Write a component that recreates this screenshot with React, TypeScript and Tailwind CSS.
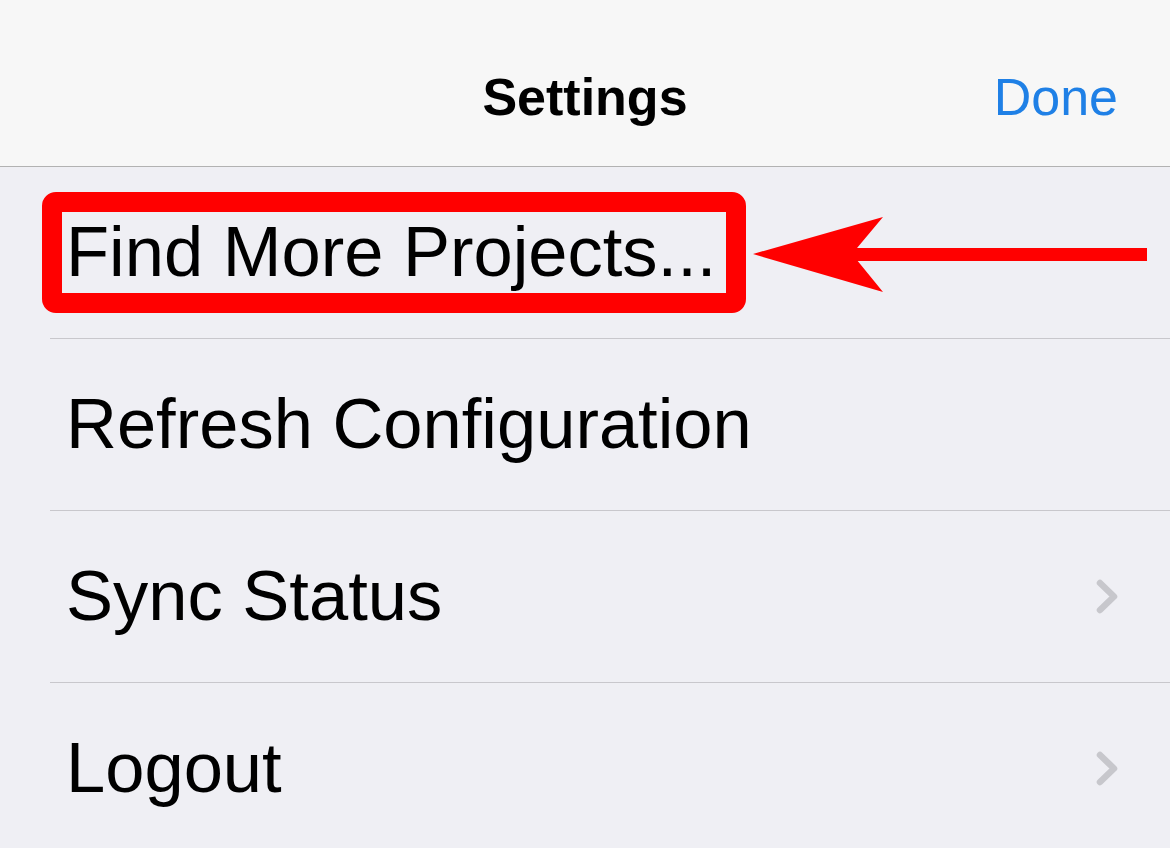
import React from 'react';

const rows = [
  { label: 'Find More Projects...', chevron: false, highlight: true },
  { label: 'Refresh Configuration', chevron: false, highlight: false },
  { label: 'Sync Status', chevron: true, highlight: false },
  { label: 'Logout', chevron: true, highlight: false },
];

const Chevron = () => (
  <svg width="22" height="35" viewBox="0 0 22 35" className="shrink-0">
    <polyline
      points="4,4 18,17.5 4,31"
      fill="none"
      stroke="#c7c7cc"
      strokeWidth="6.5"
      strokeLinecap="round"
      strokeLinejoin="round"
    />
  </svg>
);

// red annotation arrow pointing at the highlighted row
const Arrow = () => (
  <svg width="400" height="100" viewBox="0 0 400 100" className="absolute left-[750px] top-[40px]">
    <rect x="100" y="41" width="297" height="13" fill="#ff0000" />
    <polygon points="3,47 133,10 102,47 133,85" fill="#ff0000" />
  </svg>
);

const App = () => {
  return (
    <div
      className="w-[1170px] h-[848px] overflow-hidden bg-[#efeff4] text-black"
      style={{ fontFamily: '"Liberation Sans", Arial, sans-serif' }}
    >
      <div className="h-[167px] bg-[#f7f7f7] border-b border-[#b2b2b2] grid grid-cols-[1fr_auto_1fr] items-center pt-[28px] px-[52px]">
        <div />
        <span className="text-[52px] leading-none font-semibold">Settings</span>
        <span className="justify-self-end text-[52px] leading-none text-[#1f80e6]">Done</span>
      </div>

      {rows.map((row, i) => (
        <div key={i} className="relative">
          <div className="h-[171px] flex items-center pl-[66px] pr-[52px]">
            <span className="flex-1 text-[70.5px] leading-none">{row.label}</span>
            {row.chevron && <Chevron />}
          </div>
          {i < rows.length - 1 && <div className="ml-[50px] h-px bg-[#c8c7cc]" />}
          {row.highlight && (
            <>
              <div className="absolute left-[42px] top-[25px] w-[704px] h-[121px] border-[20px] border-[#ff0000] rounded-[14px]" />
              <Arrow />
            </>
          )}
        </div>
      ))}
    </div>
  );
};

export default App;
